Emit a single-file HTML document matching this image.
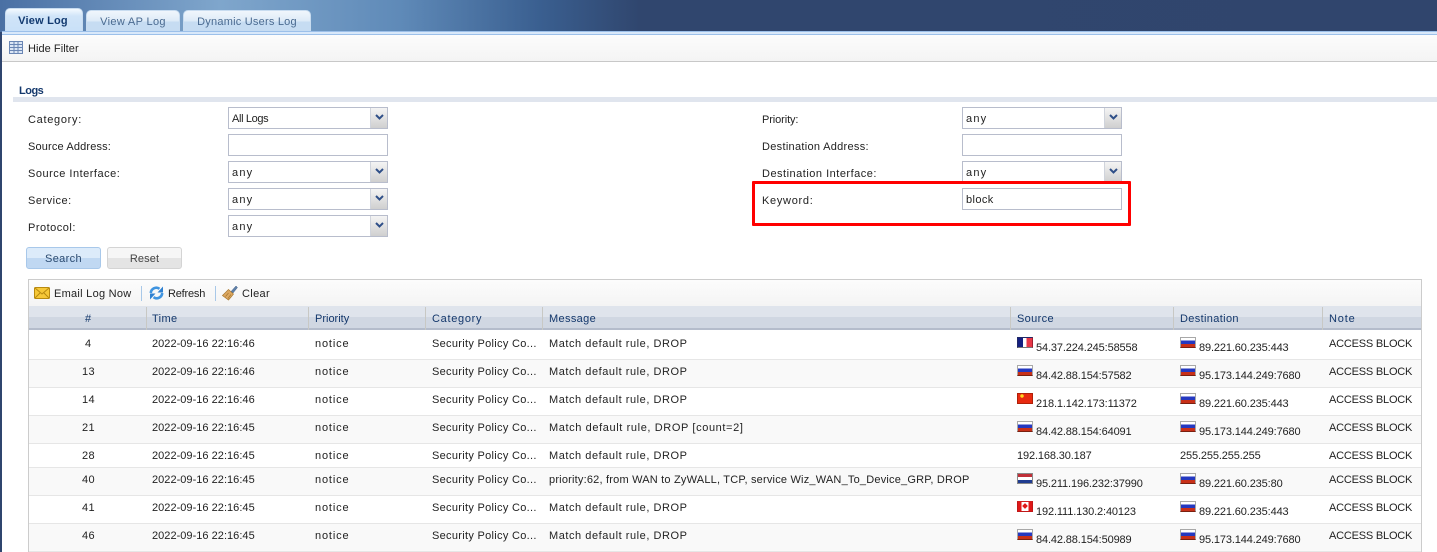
<!DOCTYPE html>
<html><head><meta charset="utf-8"><style>
html,body{margin:0;padding:0}
body{width:1437px;height:552px;overflow:hidden;position:relative;background:#fff;font:11px/18px "Liberation Sans",sans-serif;color:#222;letter-spacing:.35px}
div,span,svg{position:absolute;white-space:nowrap}
.top{left:0;top:0;width:1437px;height:32px;background:linear-gradient(90deg,#4a70a4 0,#7fa6cc 220px,#5f8ab8 400px,#3a5f90 540px,#30466e 640px,#30456d 100%)}
.strip{left:0;top:32px;width:2px;height:520px;background:#2f456e}
.tab{top:10px;height:21px;border:1px solid #c8dcf0;border-bottom:0;border-radius:5px 5px 0 0;background:linear-gradient(#f0f6fc 0,#dceaf7 50%,#c6dcf2 50%,#c6dcf2 100%);text-align:center;color:#4a6a90;line-height:22px}
.sel{background:linear-gradient(#f4f9ff 0,#d0e4f8 30%,#c8e0f8 100%);top:8px;height:24px;color:#123a70;font-weight:bold;line-height:24px;letter-spacing:.2px}
.in{width:158px;height:20px;border:1px solid #b8bdcc;background:#fff;line-height:22px;text-indent:3px;color:#222;letter-spacing:1.2px}
.ar{right:0;top:0;width:16px;height:20px;background:linear-gradient(#f4f4f4,#cfcfcf);border-left:1px solid #d0d4dc}
.ar svg{left:4px;top:6px}
.h{top:306px;height:24px;line-height:27px;color:#14386c;text-indent:6px}
.sep{top:307px;width:1px;height:23px;background:#c8c8c4}
.rw{left:29px;width:1392px;border-bottom:1px solid #e6e6e6}
.d{letter-spacing:.03px}.n{letter-spacing:.85px}.c{letter-spacing:.3px}.m{letter-spacing:.55px}.ip{letter-spacing:-.13px}.a{letter-spacing:-.2px}
.f{width:16px;height:11px;box-sizing:border-box;border:1px solid #a8a8a8;border-bottom-color:#7a2010;background:linear-gradient(#fff 0 30%,#2438c0 30% 64%,#c83018 64%)}
.fr{background:linear-gradient(90deg,#141f80 0 36%,#fff 36% 62%,#e83848 62%);border:1px solid #202868;border-right-color:#a02030;border-bottom-color:#777}
.cn{background:radial-gradient(circle at 4px 2px,#ffd820 0 1.500px,transparent 2px),#e82a10;border:1px solid #b02008}
.nl{background:linear-gradient(#c03038 0 32%,#fff 32% 64%,#203c90 64%);border:1px solid #888}
.ca{background:linear-gradient(90deg,#e01818 0 26%,#fff 26% 74%,#e01818 74%);border:1px solid #c01818;border-top-color:#d02020}
.ca::after{content:"";position:absolute;left:5px;top:2px;width:4px;height:4px;background:#e01818;transform:rotate(45deg)}
</style></head><body>
<div class="top"></div><div class="strip"></div>
<div class="tab sel" style="left:5px;width:76px;text-indent:-2px">View Log</div>
<div class="tab" style="left:86px;width:92px">View AP Log</div>
<div class="tab" style="left:183px;width:126px;letter-spacing:.22px">Dynamic Users Log</div>
<div style="left:2px;top:31px;width:1435px;height:4px;background:#d8e8fa;border-top:1px solid #9cc0ea;border-bottom:1px solid #9cc0ea;box-sizing:border-box"></div>
<div style="left:2px;top:35px;width:1435px;height:27px;box-sizing:border-box;background:linear-gradient(#fcfcfc,#f4f4f4);border-bottom:1px solid #c8c8c8"></div>
<svg style="left:9px;top:41px" width="14" height="13"><rect x=".5" y=".5" width="13" height="12" fill="#dbe6f5" stroke="#6a86b4"/><path d="M1 3.500h12M1 6.500h12M1 9.500h12M5 1v11M9 1v11" stroke="#6a86b4"/></svg>
<div style="left:28px;top:40px;letter-spacing:.05px">Hide Filter</div>
<div style="left:19px;top:82px;font-weight:bold;color:#14386c;letter-spacing:-.5px">Logs</div>
<div style="left:13px;top:97px;width:1424px;height:5px;background:#e0e5ee"></div>

<div style="left:28px;top:111px;letter-spacing:.7px">Category:</div>
<div style="left:28px;top:138px;letter-spacing:.15px">Source Address:</div>
<div style="left:28px;top:165px;letter-spacing:.5px">Source Interface:</div>
<div style="left:28px;top:192px;letter-spacing:.5px">Service:</div>
<div style="left:28px;top:219px;letter-spacing:.5px">Protocol:</div>
<div style="left:762px;top:111px;letter-spacing:-.1px">Priority:</div>
<div style="left:762px;top:138px;letter-spacing:.3px">Destination Address:</div>
<div style="left:762px;top:165px;letter-spacing:.5px">Destination Interface:</div>
<div style="left:762px;top:192px;letter-spacing:.7px">Keyword:</div>

<div class="in" style="left:228px;top:107px;letter-spacing:-.35px">All Logs<span class="ar"><svg width="9" height="7"><path d="M1 1l3.500 3.500L8 1" fill="none" stroke="#2f4f88" stroke-width="2"/></svg></span></div>
<div class="in" style="left:228px;top:134px"></div>
<div class="in" style="left:228px;top:161px">any<span class="ar"><svg width="9" height="7"><path d="M1 1l3.500 3.500L8 1" fill="none" stroke="#2f4f88" stroke-width="2"/></svg></span></div>
<div class="in" style="left:228px;top:188px">any<span class="ar"><svg width="9" height="7"><path d="M1 1l3.500 3.500L8 1" fill="none" stroke="#2f4f88" stroke-width="2"/></svg></span></div>
<div class="in" style="left:228px;top:215px">any<span class="ar"><svg width="9" height="7"><path d="M1 1l3.500 3.500L8 1" fill="none" stroke="#2f4f88" stroke-width="2"/></svg></span></div>
<div class="in" style="left:962px;top:107px">any<span class="ar"><svg width="9" height="7"><path d="M1 1l3.500 3.500L8 1" fill="none" stroke="#2f4f88" stroke-width="2"/></svg></span></div>
<div class="in" style="left:962px;top:134px"></div>
<div class="in" style="left:962px;top:161px">any<span class="ar"><svg width="9" height="7"><path d="M1 1l3.500 3.500L8 1" fill="none" stroke="#2f4f88" stroke-width="2"/></svg></span></div>
<div class="in" style="left:962px;top:188px;letter-spacing:.4px">block</div>
<div style="left:752px;top:181px;width:379px;height:45px;box-sizing:border-box;border:3px solid #f00;border-radius:1px"></div>

<div style="left:26px;top:247px;width:75px;height:22px;box-sizing:border-box;border:1px solid #a8c8ea;border-radius:3px;background:linear-gradient(#dcebfa 0 50%,#c0d8f2 50%);text-align:center;line-height:23px;color:#2a4a70">Search</div>
<div style="left:107px;top:247px;width:75px;height:22px;box-sizing:border-box;border:1px solid #d4d4d4;border-radius:3px;background:linear-gradient(#f6f6f6 0 50%,#e4e4e4 50%);text-align:center;line-height:23px;color:#444;letter-spacing:.1px">Reset</div>

<div style="left:28px;top:279px;width:1394px;height:273px;box-sizing:border-box;border:1px solid #ccc;border-bottom:0"></div>
<div style="left:29px;top:280px;width:1392px;height:26px;background:linear-gradient(#fcfcfc,#f4f4f4)"></div>
<svg style="left:34px;top:287px" width="16" height="12"><rect x=".5" y=".5" width="15" height="11" rx="1" fill="#f6c838" stroke="#b88a10"/><path d="M1 1l7 6 7-6M1 11l5-5M15 11l-5-5" fill="none" stroke="#b88a10"/></svg>
<div style="left:54px;top:285px;letter-spacing:.27px">Email Log Now</div>
<div style="left:141px;top:286px;width:1px;height:15px;background:#a8c8e8"></div>
<svg style="left:149px;top:285px" width="15" height="16"><path d="M1.800 8A5.500 5.500 0 0 1 10.500 3.800" fill="none" stroke="#3f94e0" stroke-width="2.600"/><path d="M8.500 7.500H14V1.500z" fill="#2f80d0"/><path d="M13.200 8A5.500 5.500 0 0 1 4.500 12.200" fill="none" stroke="#3f94e0" stroke-width="2.600"/><path d="M6.500 8.500H1V14.500z" fill="#2f80d0"/></svg>
<div style="left:168px;top:285px;letter-spacing:-.2px">Refresh</div>
<div style="left:215px;top:286px;width:1px;height:15px;background:#a8c8e8"></div>
<svg style="left:222px;top:285px" width="16" height="16"><path d="M9 6.500L14 1l1.500 1.500L11 8z" fill="#5f80a8" stroke="#3f5f88" stroke-width=".5"/><path d="M6.500 4.500l5 4.500-2 2.500-3 3.500-6-4.500L4 7z" fill="#dca862" stroke="#a87830" stroke-width=".7"/><path d="M3.500 11.500l3-3.500M6 13.500l3-4" stroke="#a87830" stroke-width=".7"/></svg>
<div style="left:242px;top:285px">Clear</div>

<div style="left:29px;top:306px;width:1392px;height:24px;background:linear-gradient(#dfe4ec 0 50%,#d0d7e2 50%);border-bottom:2px solid #b4bccb;box-sizing:border-box"></div>
<div class="h" style="left:85px;text-indent:0">#</div>
<div class="h" style="left:146px">Time</div><div class="h" style="left:309px;letter-spacing:0">Priority</div><div class="h" style="left:426px;letter-spacing:.7px">Category</div><div class="h" style="left:543px">Message</div><div class="h" style="left:1011px">Source</div><div class="h" style="left:1174px">Destination</div><div class="h" style="left:1323px;letter-spacing:.85px">Note</div>
<div class="sep" style="left:146px"></div><div class="sep" style="left:308px"></div><div class="sep" style="left:425px"></div><div class="sep" style="left:542px"></div><div class="sep" style="left:1010px"></div><div class="sep" style="left:1173px"></div><div class="sep" style="left:1322px"></div>

<div class="rw" style="top:330px;height:29px;background:#fff"></div>
<div class="rw" style="top:360px;height:27px;background:#f9f9f9"></div>
<div class="rw" style="top:388px;height:27px;background:#fff"></div>
<div class="rw" style="top:416px;height:27px;background:#f9f9f9"></div>
<div class="rw" style="top:444px;height:23px;background:#fff"></div>
<div class="rw" style="top:468px;height:27px;background:#f9f9f9"></div>
<div class="rw" style="top:496px;height:27px;background:#fff"></div>
<div class="rw" style="top:524px;height:27px;background:#f9f9f9"></div>

<div style="left:85px;top:335px">4</div><div class="d" style="left:152px;top:335px">2022-09-16 22:16:46</div><div class="n" style="left:315px;top:335px">notice</div><div class="c" style="left:432px;top:335px">Security Policy Co...</div><div class="m" style="left:549px;top:335px">Match default rule, DROP</div><span class="f fr" style="left:1017px;top:337px"></span><div class="ip" style="left:1036px;top:339px">54.37.224.245:58558</div><span class="f" style="left:1180px;top:337px"></span><div class="ip" style="left:1199px;top:339px">89.221.60.235:443</div><div class="a" style="left:1329px;top:335px">ACCESS BLOCK</div>

<div style="left:82px;top:363px">13</div><div class="d" style="left:152px;top:363px">2022-09-16 22:16:46</div><div class="n" style="left:315px;top:363px">notice</div><div class="c" style="left:432px;top:363px">Security Policy Co...</div><div class="m" style="left:549px;top:363px">Match default rule, DROP</div><span class="f" style="left:1017px;top:365px"></span><div class="ip" style="left:1036px;top:367px">84.42.88.154:57582</div><span class="f" style="left:1180px;top:365px"></span><div class="ip" style="left:1199px;top:367px">95.173.144.249:7680</div><div class="a" style="left:1329px;top:363px">ACCESS BLOCK</div>

<div style="left:82px;top:391px">14</div><div class="d" style="left:152px;top:391px">2022-09-16 22:16:46</div><div class="n" style="left:315px;top:391px">notice</div><div class="c" style="left:432px;top:391px">Security Policy Co...</div><div class="m" style="left:549px;top:391px">Match default rule, DROP</div><span class="f cn" style="left:1017px;top:393px"></span><div class="ip" style="left:1036px;top:395px">218.1.142.173:11372</div><span class="f" style="left:1180px;top:393px"></span><div class="ip" style="left:1199px;top:395px">89.221.60.235:443</div><div class="a" style="left:1329px;top:391px">ACCESS BLOCK</div>

<div style="left:82px;top:419px">21</div><div class="d" style="left:152px;top:419px">2022-09-16 22:16:45</div><div class="n" style="left:315px;top:419px">notice</div><div class="c" style="left:432px;top:419px">Security Policy Co...</div><div class="m" style="left:549px;top:419px;letter-spacing:.61px">Match default rule, DROP [count=2]</div><span class="f" style="left:1017px;top:421px"></span><div class="ip" style="left:1036px;top:423px">84.42.88.154:64091</div><span class="f" style="left:1180px;top:421px"></span><div class="ip" style="left:1199px;top:423px">95.173.144.249:7680</div><div class="a" style="left:1329px;top:419px">ACCESS BLOCK</div>

<div style="left:82px;top:447px">28</div><div class="d" style="left:152px;top:447px">2022-09-16 22:16:45</div><div class="n" style="left:315px;top:447px">notice</div><div class="c" style="left:432px;top:447px">Security Policy Co...</div><div class="m" style="left:549px;top:447px">Match default rule, DROP</div><div class="ip" style="left:1017px;top:447px">192.168.30.187</div><div class="ip" style="left:1180px;top:447px">255.255.255.255</div><div class="a" style="left:1329px;top:447px">ACCESS BLOCK</div>

<div style="left:82px;top:471px">40</div><div class="d" style="left:152px;top:471px">2022-09-16 22:16:45</div><div class="n" style="left:315px;top:471px">notice</div><div class="c" style="left:432px;top:471px">Security Policy Co...</div><div style="left:549px;top:471px;letter-spacing:.2px">priority:62, from WAN to ZyWALL, TCP, service Wiz_WAN_To_Device_GRP, DROP</div><span class="f nl" style="left:1017px;top:473px"></span><div class="ip" style="left:1036px;top:475px">95.211.196.232:37990</div><span class="f" style="left:1180px;top:473px"></span><div class="ip" style="left:1199px;top:475px">89.221.60.235:80</div><div class="a" style="left:1329px;top:471px">ACCESS BLOCK</div>

<div style="left:82px;top:499px">41</div><div class="d" style="left:152px;top:499px">2022-09-16 22:16:45</div><div class="n" style="left:315px;top:499px">notice</div><div class="c" style="left:432px;top:499px">Security Policy Co...</div><div class="m" style="left:549px;top:499px">Match default rule, DROP</div><span class="f ca" style="left:1017px;top:501px"></span><div class="ip" style="left:1036px;top:503px">192.111.130.2:40123</div><span class="f" style="left:1180px;top:501px"></span><div class="ip" style="left:1199px;top:503px">89.221.60.235:443</div><div class="a" style="left:1329px;top:499px">ACCESS BLOCK</div>

<div style="left:82px;top:527px">46</div><div class="d" style="left:152px;top:527px">2022-09-16 22:16:45</div><div class="n" style="left:315px;top:527px">notice</div><div class="c" style="left:432px;top:527px">Security Policy Co...</div><div class="m" style="left:549px;top:527px">Match default rule, DROP</div><span class="f" style="left:1017px;top:529px"></span><div class="ip" style="left:1036px;top:531px">84.42.88.154:50989</div><span class="f" style="left:1180px;top:529px"></span><div class="ip" style="left:1199px;top:531px">95.173.144.249:7680</div><div class="a" style="left:1329px;top:527px">ACCESS BLOCK</div>
</body></html>
